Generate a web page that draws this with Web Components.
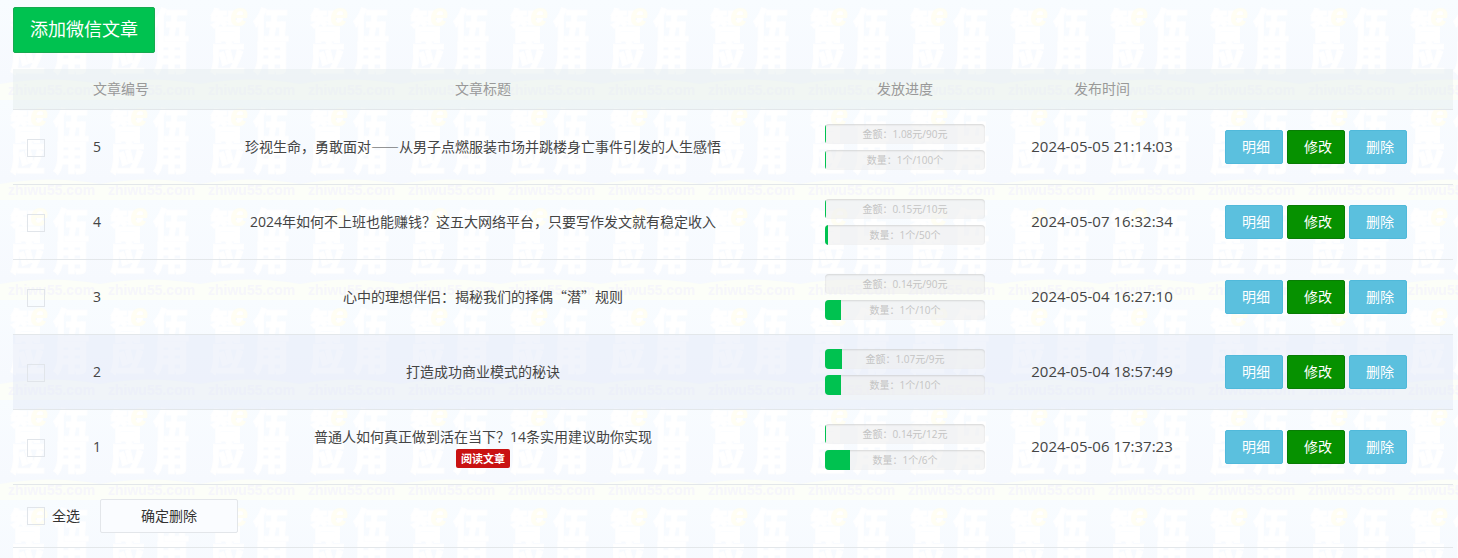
<!DOCTYPE html>
<html lang="zh-CN">
<head>
<meta charset="utf-8">
<title>微信文章</title>
<style>
body{margin:0;background:#f9fcff;color:#333;font:14px/20px "Open Sans","Noto Sans","Noto Sans CJK SC",sans-serif}
</style>
</head>
<body>
<article-page></article-page>
<script>
const define = (name, html, setup) => customElements.define(name, class extends HTMLElement {
  connectedCallback() {
    if (this.shadowRoot) return;
    const t = document.createElement('template');
    t.innerHTML = html;
    this.attachShadow({mode: 'open'}).append(t.content.cloneNode(true));
    if (setup) setup(this, this.shadowRoot);
  }
});

define('water-mark', `
<style>
:host{position:absolute;inset:0;z-index:-1;overflow:hidden;pointer-events:none}
svg{display:block;width:100%;height:100%}
text{font-family:"Noto Sans CJK SC",sans-serif;font-weight:900}
.url{font-family:"Liberation Sans",sans-serif;font-weight:700}
</style>
<svg aria-hidden="true">
  <defs>
    <linearGradient id="sky" x1="0" y1="0" x2="0" y2="1">
      <stop offset="0" stop-color="#f8fcff"/><stop offset=".8" stop-color="#f6f9fe"/>
      <stop offset="1" stop-color="#f8fcff"/>
    </linearGradient>
    <pattern id="tile" width="100" height="100" patternUnits="userSpaceOnUse">
      <rect width="100" height="100" fill="url(#sky)"/>
      <path d="M0 84Q50 75 100 84V100H0Z" fill="#fcfef8"/>
      <g fill="#fff" stroke="#fff" stroke-width="1">
        <text x="10" y="39" font-size="35">智</text><text x="53" y="39" font-size="36">伍</text>
        <text x="10" y="71" font-size="35">应</text><text x="53" y="71" font-size="36">用</text>
      </g>
      <text class="url" x="30" y="26" font-size="33" font-style="italic" fill="#fffef3">e</text>
      <text class="url" x="8" y="95" font-size="14" fill="#f6f6fb">zhiwu55.com</text>
    </pattern>
  </defs>
  <rect width="100%" height="100%" fill="url(#tile)"/>
</svg>`);

define('ui-button', `
<style>
:host{display:inline-block}
button{display:block;box-sizing:border-box;width:100%;min-width:58px;height:34px;padding:0 12px 0 16px;border:1px solid #50b9da;border-radius:2px;background:#5bc0de;color:#fff;font:14px/20px "Open Sans","Noto Sans CJK SC",sans-serif;white-space:nowrap;cursor:pointer}
:host([kind=edit]) button{background:#069100;border-color:#087d05}
:host([kind=add]) button{height:46px;padding:0 16px 2px;background:#00c250;border-color:#16aa50;font-size:18px}
:host([kind=plain]) button{min-width:138px;padding:0 16px;background:#fafcff;border-color:#e3e6ea;color:#333}
</style>
<button type="button"><slot></slot></button>`);

define('check-box', `
<style>
:host{display:inline-block}
label{display:flex;align-items:center;gap:7px}
input{appearance:none;box-sizing:border-box;width:18px;height:18px;margin:0;border:1px solid #e1e5ea;background:transparent}
input:checked{background:#00c250}
</style>
<label><input type="checkbox"><slot></slot></label>`,
(host, root) => { if (host.hasAttribute('name')) root.querySelector('input').setAttribute('aria-label', host.getAttribute('name')); });

define('progress-bar', `
<style>
:host{display:block;width:160px}
.bar{position:relative;height:20px;border-radius:4px;overflow:hidden;background:#eeeeee99;box-shadow:inset 0 1px 2px #0000001f;color:#c4c4c4;font-size:10px;line-height:20px;text-align:center}
.fill{position:absolute;top:0;bottom:0;left:0;background:#00c250}
.text{position:relative}
</style>
<div class="bar"><div class="fill"></div><span class="text"><slot></slot></span></div>`,
(host, root) => { root.querySelector('.fill').style.width = `round(down, ${host.getAttribute('value')}%, 1px)`; });

const rows = [
  [5, '珍视生命，勇敢面对——从男子点燃服装市场并跳楼身亡事件引发的人生感悟', '1.08元/90元', 1, '1个/100个', 1, '2024-05-05 21:14:03'],
  [4, '2024年如何不上班也能赚钱？这五大网络平台，只要写作发文就有稳定收入', '0.15元/10元', 1, '1个/50个', 2, '2024-05-07 16:32:34'],
  [3, '心中的理想伴侣：揭秘我们的择偶“潜”规则', '0.14元/90元', 0, '1个/10个', 10, '2024-05-04 16:27:10'],
  [2, '打造成功商业模式的秘诀', '1.07元/9元', 11, '1个/10个', 10, '2024-05-04 18:57:49'],
  [1, '普通人如何真正做到活在当下？14条实用建议助你实现', '0.14元/12元', 1, '1个/6个', 16, '2024-05-06 17:37:23']
];
// Dashes and quotes take their full-width form from the CJK face.
const fullWidth = s => s.replace(/——|“潜”/g, m => `<span class="cjk">${m}</span>`);

define('article-table', `
<style>
:host{display:block}
table{width:100%;border-collapse:separate;border-spacing:0;table-layout:fixed}
.pick{width:46px}.id{width:106px}.bars{width:208px}.time{width:186px}.ops{width:258px}
th,td{box-sizing:border-box;padding:0;border-bottom:1px solid #e3e7ea;text-align:center;vertical-align:middle}
th{height:41px;background:#e6eeee80;color:#999;font-weight:400}
td{height:75px;color:#444}
td:first-child{text-align:left;padding-left:14px}
td:nth-child(5){font-size:15px;padding-bottom:2px}
check-box{vertical-align:middle}
th:nth-child(2),td:nth-child(2){text-align:left;padding-left:34px;white-space:nowrap}
tr.active td{background:#e4eaf780}
progress-bar{margin:0 auto}
progress-bar + progress-bar{margin-top:6px}
.cjk{font-family:"Noto Sans CJK SC",sans-serif;line-height:1}
.actions{display:flex;justify-content:center;gap:4px;padding-right:16px}
.tag{display:table;margin:2px auto 0;padding:0 5px;border-radius:2px;background:#c91212;color:#fff;font-size:11px;line-height:19px;font-weight:700;text-decoration:none}
</style>
<table>
  <colgroup><col class="pick"><col class="id"><col><col class="bars"><col class="time"><col class="ops"></colgroup>
  <thead><tr><th></th><th>文章编号</th><th>文章标题</th><th>发放进度</th><th>发布时间</th><th></th></tr></thead>
  <tbody>${rows.map(([id, title, money, m, count, c, time]) => `
    <tr${id === 2 ? ' class="active"' : ''}>
      <td><check-box name="选择文章 ${id}"></check-box></td><td>${id}</td>
      <td>${fullWidth(title)}${id === 1 ? '<a class="tag" href="#">阅读文章</a>' : ''}</td>
      <td><progress-bar value="${m}">金额：${money}</progress-bar><progress-bar value="${c}">数量：${count}</progress-bar></td>
      <td>${time}</td>
      <td><div class="actions"><ui-button>明细</ui-button><ui-button kind="edit">修改</ui-button><ui-button>删除</ui-button></div></td>
    </tr>`).join('')}
  </tbody>
</table>`);

define('article-page', `
<style>
:host{display:block;position:relative;z-index:0;box-sizing:border-box;min-height:100vh;padding:7px 5px 10px 13px}
.top{display:flex;margin-bottom:16px}
.bottom{display:flex;align-items:center;gap:20px;padding:14px;border-bottom:1px solid #e3e7ea}
</style>
<water-mark></water-mark>
<div class="top"><ui-button kind="add">添加微信文章</ui-button></div>
<article-table></article-table>
<div class="bottom"><check-box>全选</check-box><ui-button kind="plain">确定删除</ui-button></div>`);
</script>
</body>
</html>
